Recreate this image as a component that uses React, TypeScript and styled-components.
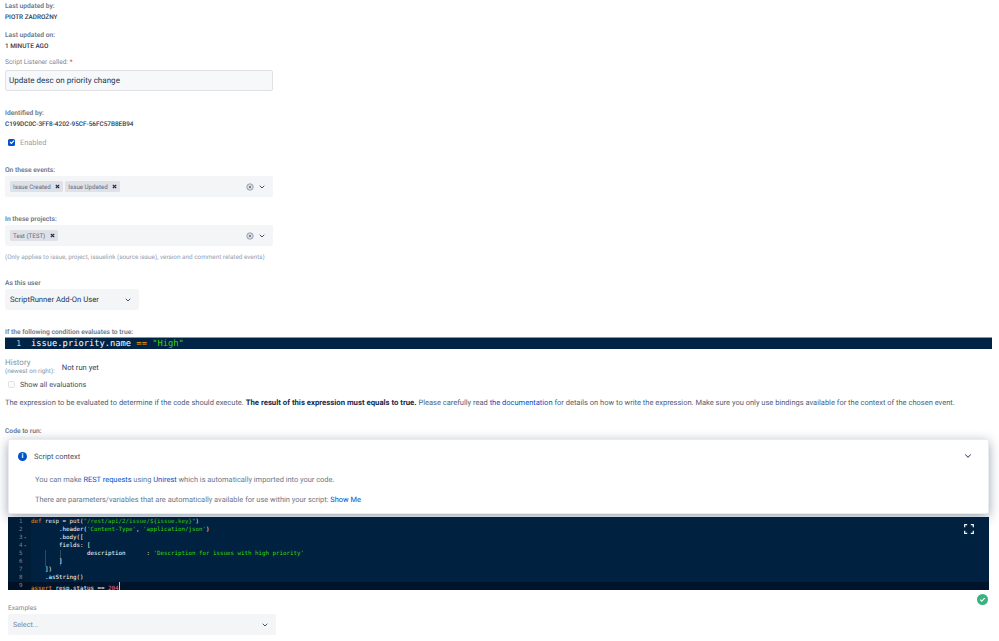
import * as React from 'react';
import styled, { createGlobalStyle } from 'styled-components';
import { ChevronDown } from 'lucide-react';

const GlobalStyle = createGlobalStyle`
  html, body {
    margin: 0;
    padding: 0;
    background: #fff;
    overflow: hidden;
    font-family: Roboto, "Noto Sans", sans-serif;
    color: #172b4d;
    text-rendering: geometricPrecision;
  }
`;

const Page = styled.div`
  width: 999px;
  height: 641px;
  overflow: hidden;
  box-sizing: border-box;
  padding: 0 7px 0 5px;
  display: flex;
  flex-direction: column;
`;

const Block = styled.div<{ $top: number; $left?: number }>`
  margin-top: ${(p) => p.$top}px;
  margin-left: ${(p) => p.$left || 0}px;
  flex: none;
`;

const Label = styled.div`
  font-size: 6.7px;
  line-height: 10px;
  font-weight: 600;
  color: #6b778c;
  white-space: nowrap;
`;

const Value = styled.div`
  font-size: 6.4px;
  line-height: 10px;
  font-weight: 500;
  color: #253858;
  margin-top: 1px;
  white-space: nowrap;
`;

const RegularLabel = styled(Label)`
  font-size: 6.6px;
  font-weight: 400;
  color: #7a869a;
`;

const Required = styled.span`
  color: #de350b;
`;

const TextInput = styled.div`
  box-sizing: border-box;
  width: 268px;
  height: 21px;
  margin-top: 3px;
  padding: 0 3px;
  display: flex;
  align-items: center;
  background: #f7f8fa;
  border: 1px solid #dfe1e6;
  border-radius: 2px;
  font-size: 8.05px;
  color: #253858;
`;

const CheckRow = styled.div`
  display: flex;
  align-items: center;
  gap: 5px;
  padding-left: 3px;
  height: 12px;
  font-size: 7.4px;
  color: #97a0af;
`;

const CheckOn = styled.span`
  width: 7px;
  height: 7px;
  border-radius: 1.5px;
  background: #0052cc;
  display: flex;
  align-items: center;
  justify-content: center;
`;

const CheckOff = styled.span`
  width: 5px;
  height: 5px;
  border-radius: 1.5px;
  background: #fafbfc;
  border: 1px solid #dfe1e6;
`;

const ShowAllText = styled.span`
  color: #42526e;
  font-size: 7.3px;
`;

const SelectBox = styled.div<{ $width: number; $gap?: number }>`
  box-sizing: border-box;
  width: ${(p) => p.$width}px;
  height: 21px;
  margin-top: ${(p) => (p.$gap === undefined ? 1 : p.$gap)}px;
  padding: 0 5px;
  display: flex;
  align-items: center;
  gap: 2px;
  background: #f4f5f7;
  border-radius: 2px;
  font-size: 7.7px;
  color: #253858;
  white-space: nowrap;
`;

const Tag = styled.span`
  display: inline-flex;
  align-items: center;
  justify-content: space-between;
  height: 11px;
  padding: 0 3px;
  background: #dfe1e6;
  border-radius: 1.5px;
  font-size: 6.2px;
  color: #5e6c84;
  gap: 4.5px;
`;

const Spacer = styled.span`
  flex: 1;
`;

const Help = styled.div`
  font-size: 6.36px;
  line-height: 10px;
  color: #97a0af;
  white-space: nowrap;
`;

const Placeholder = styled.span`
  color: #7a869a;
  font-size: 7.2px;
`;

const ConditionEditor = styled.div`
  box-sizing: border-box;
  height: 12px;
  margin-top: 0;
  background: #002346;
  border-top: 1px solid #8993a4;
  display: flex;
  align-items: center;
  font-family: "DejaVu Sans Mono", monospace;
  font-size: 8.75px;
  color: #fff;
  white-space: pre;
`;

const ConditionGutter = styled.span`
  width: 26px;
  padding-right: 10px;
  box-sizing: border-box;
  text-align: right;
  color: #c1c7d0;
  font-size: 8px;
`;

const Op = styled.span`
  color: #ff9d00;
`;

const Str = styled.span`
  color: #3ad900;
`;

const HistoryRow = styled.div`
  display: flex;
  align-items: center;
  gap: 7px;
`;

const HistoryLabel = styled.div`
  font-size: 8px;
  line-height: 8px;
  color: #8993a4;
`;

const HistorySub = styled.div`
  font-size: 6.4px;
  line-height: 8px;
  color: #8993a4;
`;

const NotRun = styled.div`
  font-size: 7.6px;
  color: #344563;
`;

const Paragraph = styled.div`
  font-size: 7.5px;
  line-height: 11px;
  color: #505f79;
  white-space: nowrap;
  b {
    color: #172b4d;
    font-size: 7.75px;
    font-weight: 700;
  }
`;

const Link = styled.a`
  color: #0052cc;
  text-decoration: none;
`;

const Card = styled.div`
  box-sizing: border-box;
  position: relative;
  z-index: 1;
  width: 981px;
  height: 75px;
  padding: 11px 11px 0 9px;
  background: #fff;
  border-radius: 2px;
  border: 1px solid #ebecf0;
  box-shadow: 0 3px 12px rgba(9, 30, 66, 0.4);
`;

const CardHead = styled.div`
  display: flex;
  align-items: center;
  height: 10px;
  font-size: 7.5px;
  color: #42526e;
`;

const InfoDot = styled.span`
  width: 9px;
  height: 9px;
  border-radius: 50%;
  background: #0052cc;
  color: #fff;
  font-size: 7px;
  font-weight: 700;
  line-height: 9px;
  text-align: center;
  margin-right: 7px;
`;

const CardText = styled.div<{ $top: number }>`
  margin: ${(p) => p.$top}px 0 0 17px;
  font-size: 7.45px;
  line-height: 10px;
  color: #6b778c;
  white-space: nowrap;
`;

const CodeWrap = styled.div`
  position: relative;
  box-sizing: border-box;
  width: 981px;
  height: 73px;
  margin: 3px 0 0 3px;
  background: #002240;
  font-family: "DejaVu Sans Mono", monospace;
  font-size: 5.82px;
  line-height: 8px;
  padding-top: 1px;
  color: #fff;
`;

const CodeLine = styled.div<{ $active?: boolean }>`
  display: flex;
  height: 8px;
  white-space: pre;
  background: ${(p) => (p.$active ? '#00142b' : 'transparent')};
`;

const LineNo = styled.span`
  flex: none;
  width: 23px;
  padding-left: 11px;
  box-sizing: border-box;
  color: #7a869a;
  background: rgba(0, 0, 0, 0.12);
`;

const Fold = styled.span`
  margin-left: 1.5px;
  font-size: 4px;
  color: #7a869a;
`;

const CodeText = styled.span<{ $guides?: boolean }>`
  flex: 1;
  background-image: ${(p) =>
    p.$guides
      ? 'linear-gradient(to right, transparent 14px, rgba(255,255,255,.18) 14px, rgba(255,255,255,.18) 15px, transparent 15px, transparent 29px, rgba(255,255,255,.18) 29px, rgba(255,255,255,.18) 30px, transparent 30px)'
      : 'none'};
`;

const Kw = styled.span`
  color: #ff9d00;
`;

const Green = styled.span`
  color: #3ad900;
`;

const Num = styled.span`
  color: #ff628c;
`;

const Caret = styled.span`
  display: inline-block;
  width: 1px;
  height: 8px;
  background: #c1c7d0;
`;

const FullscreenIcon = styled.svg`
  position: absolute;
  top: 7px;
  right: 15px;
`;

const StatusRow = styled.div`
  display: flex;
  justify-content: flex-end;
  height: 9px;
  margin-top: 4px;
  padding-right: 4px;
`;

const TagClose = () => (
  <svg width="5" height="5" viewBox="0 0 5 5">
    <path d="M0.8 0.8l3.4 3.4M4.2 0.8L0.8 4.2" stroke="#172b4d" strokeWidth="1.2" />
  </svg>
);

const ClearIcon = () => (
  <svg width="8" height="8" viewBox="0 0 8 8">
    <circle cx="4" cy="4" r="3.2" fill="#dfe1e6" stroke="#97a0af" strokeWidth="1" />
    <path d="M2.8 2.8l2.4 2.4M5.2 2.8L2.8 5.2" stroke="#6b778c" strokeWidth="0.9" />
  </svg>
);

const Chevron = () => <ChevronDown size={8} color="#42526e" strokeWidth={3} style={{ marginLeft: 2.5, marginRight: 2 }} />;

const codeLines: React.ReactNode[] = [
  <><Kw>def</Kw> resp = put(<Green>"/rest/api/2/issue/${'{'}issue.key{'}'}"</Green>)</>,
  <>        .header(<Green>'Content-Type'</Green>, <Green>'application/json'</Green>)</>,
  <>        .body([</>,
  <>        fields: [</>,
  <>                description      : <Green>'Description for issues with high priority'</Green></>,
  <>        ]</>,
  <>    ])</>,
  <>    .asString()</>,
  <><Kw>assert</Kw> resp.status == <Num>204</Num><Caret /></>,
];

const App: React.FC = () => (
  <Page>
    <GlobalStyle />
    <Block $top={1}>
      <Label>Last updated by:</Label>
      <Value>PIOTR ZADROŻNY</Value>
    </Block>
    <Block $top={8}>
      <Label>Last updated on:</Label>
      <Value>1 MINUTE AGO</Value>
    </Block>
    <Block $top={6}>
      <RegularLabel>Script Listener called: <Required>*</Required></RegularLabel>
      <TextInput>Update desc on priority change</TextInput>
    </Block>
    <Block $top={17}>
      <Label>Identified by:</Label>
      <Value>C199DC0C-3FF8-4202-95CF-56FC57B8EB94</Value>
    </Block>
    <Block $top={7}>
      <CheckRow>
        <CheckOn>
          <svg width="6" height="6" viewBox="0 0 6 6">
            <path d="M1 3l1.4 1.4L5 1.6" fill="none" stroke="#fff" strokeWidth="1.1" />
          </svg>
        </CheckOn>
        Enabled
      </CheckRow>
    </Block>
    <Block $top={17}>
      <Label>On these events:</Label>
      <SelectBox $width={268}>
        <Tag>Issue Created <TagClose /></Tag>
        <Tag>Issue Updated <TagClose /></Tag>
        <Spacer />
        <ClearIcon />
        <Chevron />
      </SelectBox>
    </Block>
    <Block $top={17}>
      <Label>In these projects:</Label>
      <SelectBox $width={268}>
        <Tag>Test (TEST) <TagClose /></Tag>
        <Spacer />
        <ClearIcon />
        <Chevron />
      </SelectBox>
    </Block>
    <Block $top={6}>
      <Help>(Only applies to issue, project, issuelink (source issue), version and comment related events)</Help>
    </Block>
    <Block $top={16}>
      <Label>As this user</Label>
      <SelectBox $width={134}>
        ScriptRunner Add-On User
        <Spacer />
        <Chevron />
      </SelectBox>
    </Block>
    <Block $top={17}>
      <Label>If the following condition evaluates to true:</Label>
      <ConditionEditor>
        <ConditionGutter>1</ConditionGutter>
        <span>issue.priority.name <Op>==</Op> <Str>"High"</Str></span>
      </ConditionEditor>
    </Block>
    <Block $top={10}>
      <HistoryRow>
        <div>
          <HistoryLabel>History</HistoryLabel>
          <HistorySub>(newest on right):</HistorySub>
        </div>
        <NotRun>Not run yet</NotRun>
      </HistoryRow>
    </Block>
    <Block $top={3}>
      <CheckRow>
        <CheckOff />
        <ShowAllText>Show all evaluations</ShowAllText>
      </CheckRow>
    </Block>
    <Block $top={7}>
      <Paragraph>
        The expression to be evaluated to determine if the code should execute. <b>The result of this expression must equals to true.</b> Please carefully read <Link>the documentation</Link> for details on how to write the expression. Make sure you only use bindings available for the context of the chosen event.
      </Paragraph>
    </Block>
    <Block $top={18}>
      <Label>Code to run:</Label>
    </Block>
    <Block $top={3} $left={3}>
      <Card>
        <CardHead>
          <InfoDot>i</InfoDot>
          Script context
          <Spacer />
          <ChevronDown size={10} color="#42526e" strokeWidth={2.5} style={{ marginRight: 4 }} />
        </CardHead>
        <CardText $top={14}>You can make <Link>REST requests</Link> using <Link>Unirest</Link> which is automatically imported into your code.</CardText>
        <CardText $top={10}>There are parameters/variables that are automatically available for use within your script: <Link>Show Me</Link></CardText>
      </Card>
    </Block>
    <CodeWrap>
      {codeLines.map((line, i) => (
        <CodeLine key={i} $active={i === 8}>
          <LineNo>
            {i + 1}
            {(i === 2 || i === 3) && <Fold>▾</Fold>}
          </LineNo>
          <CodeText $guides={i === 4 || i === 5}>{line}</CodeText>
        </CodeLine>
      ))}
      <FullscreenIcon width="10" height="10" viewBox="0 0 10 10">
        <path d="M0.7 3.2V0.7H3.2M6.8 0.7H9.3V3.2M9.3 6.8V9.3H6.8M3.2 9.3H0.7V6.8" fill="none" stroke="#fff" strokeWidth="1.2" />
      </FullscreenIcon>
    </CodeWrap>
    <StatusRow>
      <svg width="11" height="11" viewBox="0 0 11 11">
        <circle cx="5.5" cy="5.5" r="5.5" fill="#36b37e" />
        <path d="M3.3 5.7l1.5 1.5 2.9-3" fill="none" stroke="#fff" strokeWidth="1.2" />
      </svg>
    </StatusRow>
    <Block $top={0} $left={3}>
      <RegularLabel>Examples</RegularLabel>
      <SelectBox $width={268}>
        <Placeholder>Select...</Placeholder>
        <Spacer />
        <Chevron />
      </SelectBox>
    </Block>
  </Page>
);

export default App;
